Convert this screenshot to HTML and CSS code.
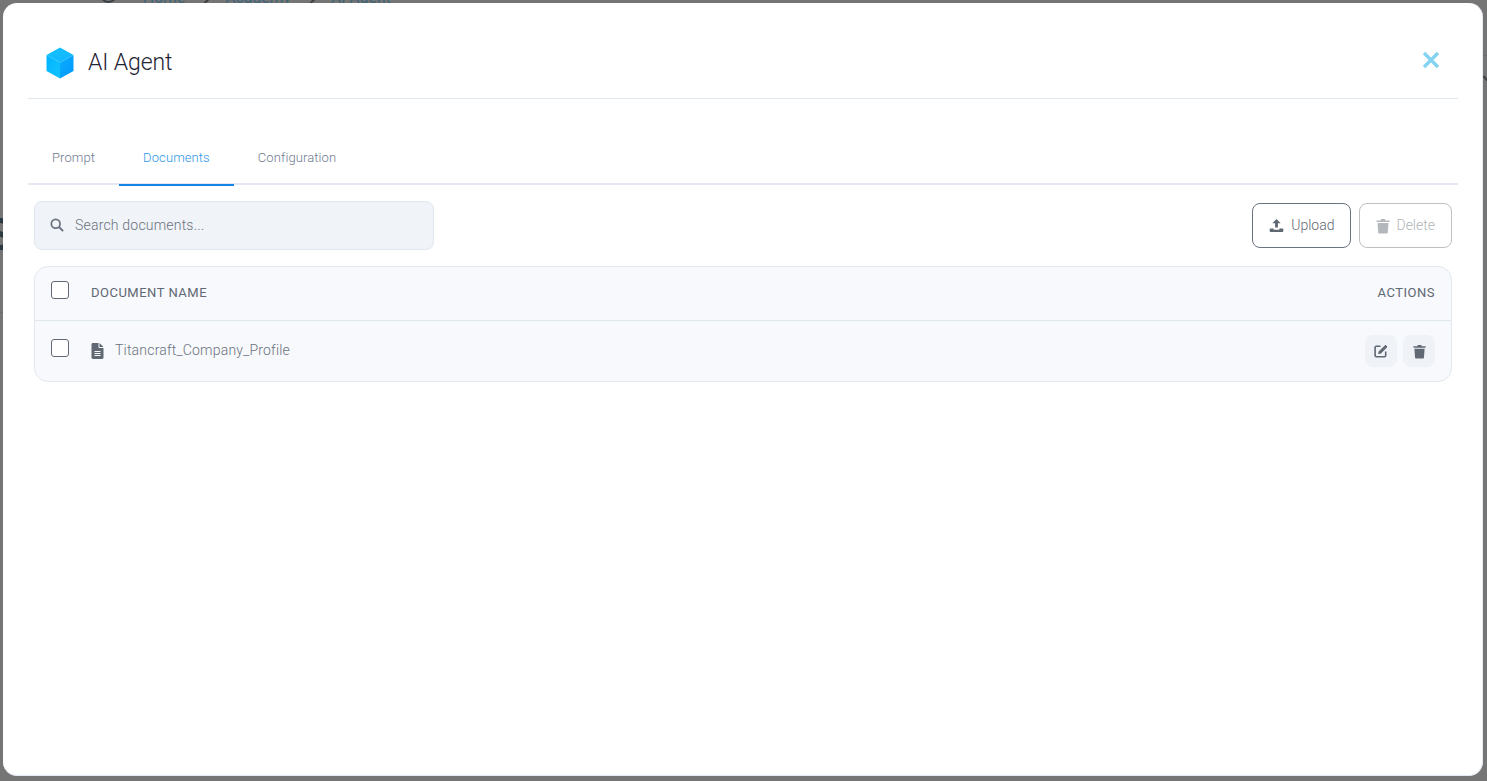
FILE: index.html
```html
<!DOCTYPE html>
<html lang="en">
<head>
    <meta charset="UTF-8">
    <meta name="viewport" content="width=device-width, initial-scale=1.0">
    <title>AI Agent</title>
    <link rel="stylesheet" href="styles.css">
</head>
<body>
    <!-- Page behind the backdrop, only its edges show -->
    <div class="behind">
        <span class="home-icon"></span>
        <span class="crumb">Home</span>
        <span class="crumb-sep"></span>
        <span class="crumb">Academy</span>
        <span class="crumb-sep"></span>
        <span class="crumb">AI Agent</span>
    </div>
    <div class="behind-letter">S</div>
    <div class="behind-rule rule-left"></div>
    <div class="behind-rule rule-right"></div>
    <div class="behind-caret"></div>

    <div class="modal">
        <header class="modal-header">
            <div class="modal-title">
                <svg class="cube" viewBox="0 0 28 32" width="28" height="32">
                    <defs>
                        <linearGradient id="cubeTop" x1="0" y1="0" x2="1" y2="1">
                            <stop offset="0" stop-color="#17c3ff"/>
                            <stop offset="1" stop-color="#0fb4ff"/>
                        </linearGradient>
                        <linearGradient id="cubeLeft" x1="0" y1="0" x2="1" y2="1">
                            <stop offset="0" stop-color="#00b4ff"/>
                            <stop offset="1" stop-color="#14c2ff"/>
                        </linearGradient>
                        <linearGradient id="cubeRight" x1="0" y1="0" x2="1" y2="1">
                            <stop offset="0" stop-color="#0cb0ff"/>
                            <stop offset="1" stop-color="#0096fb"/>
                        </linearGradient>
                    </defs>
                    <polygon points="14,0.5 27.5,8 14,15.5 0.5,8" fill="url(#cubeTop)"/>
                    <polygon points="0.5,8 14,15.5 14,31.5 0.5,24" fill="url(#cubeLeft)"/>
                    <polygon points="27.5,8 14,15.5 14,31.5 27.5,24" fill="url(#cubeRight)"/>
                </svg>
                <h1>AI Agent</h1>
            </div>
            <button class="close-btn" aria-label="Close">
                <svg viewBox="0 0 18 18" width="18" height="18">
                    <path d="M2 2L16 16M16 2L2 16" stroke="#85d3f2" stroke-width="3.4" fill="none"/>
                </svg>
            </button>
        </header>

        <nav class="tabs">
            <a href="#" class="tab">Prompt</a>
            <a href="#" class="tab active">Documents</a>
            <a href="#" class="tab">Configuration</a>
        </nav>

        <div class="content">
            <div class="toolbar">
                <div class="search">
                    <svg class="search-icon" viewBox="0 0 16 16" width="14" height="14">
                        <circle cx="6.5" cy="6.5" r="5" stroke="#6b7280" stroke-width="2" fill="none"/>
                        <path d="M10.3 10.3L15 15" stroke="#6b7280" stroke-width="2.2" fill="none"/>
                    </svg>
                    <span class="light-text">Search documents...</span>
                </div>
                <div class="actions">
                    <button class="btn">
                        <svg viewBox="0 0 16 16" width="15" height="15">
                            <path d="M8 1L12.4 5.6H9.5V10.2H6.5V5.6H3.6Z" fill="#5f6873"/>
                            <path d="M1.6 11.2H4.8V11.8C4.8 12.2 5.1 12.4 5.5 12.4H10.5C10.9 12.4 11.2 12.2 11.2 11.8V11.2H14.4C15 11.2 15.3 11.6 15.3 12.1V13.6C15.3 14.4 14.7 15 14 15H2C1.3 15 .7 14.4 .7 13.6V12.1C.7 11.6 1 11.2 1.6 11.2Z" fill="#5f6873"/>
                        </svg>
                        <span class="light-text">Upload</span>
                    </button>
                    <button class="btn disabled">
                        <svg viewBox="0 0 14 16" width="14" height="16">
                            <path d="M0.5 2.4H4.5L5.2 1H8.8L9.5 2.4H13.5V4H0.5ZM1.5 5H12.5L11.8 14.5C11.7 15.3 11.2 15.6 10.6 15.6H3.4C2.8 15.6 2.3 15.3 2.2 14.5Z" fill="#b4b8bd"/>
                        </svg>
                        <span class="light-text">Delete</span>
                    </button>
                </div>
            </div>

            <div class="doc-table">
                <div class="doc-row doc-head">
                    <span class="checkbox"></span>
                    <span class="col-name light-text">DOCUMENT NAME</span>
                    <span class="col-actions light-text">ACTIONS</span>
                </div>
                <div class="doc-row doc-item">
                    <span class="checkbox"></span>
                    <span class="col-name file">
                        <svg viewBox="0 0 12 16" width="13" height="16">
                            <path d="M1.4 0H7V4.2C7 4.6 7.4 5 7.8 5H12V14.6C12 15.4 11.4 16 10.6 16H1.4C.6 16 0 15.4 0 14.6V1.4C0 .6 .6 0 1.4 0ZM8 0L12 4H8ZM3 8V9H9V8ZM3 10V11H9V10ZM3 12V13H9V12Z" fill="#5f6873" fill-rule="evenodd"/>
                        </svg>
                        <span class="light-text">Titancraft_Company_Profile</span>
                    </span>
                    <span class="row-actions">
                        <button class="icon-btn">
                            <svg viewBox="0 0 14 14" width="14" height="14">
                                <path d="M6.5 2.2H2.3C1.6 2.2 1.1 2.7 1.1 3.4V11.6C1.1 12.3 1.6 12.8 2.3 12.8H10.5C11.2 12.8 11.7 12.3 11.7 11.6V7.4" stroke="#5f6873" stroke-width="1.6" fill="none"/>
                                <path d="M4.6 7.6L10.8 1.4C11.2 1 11.8 1 12.2 1.4L12.9 2.1C13.3 2.5 13.3 3.1 12.9 3.5L6.7 9.7L4.2 10.1Z" fill="#5f6873"/>
                            </svg>
                        </button>
                        <button class="icon-btn">
                            <svg viewBox="0 0 14 16" width="13" height="15">
                                <path d="M0.5 2.4H4.5L5.2 1H8.8L9.5 2.4H13.5V4H0.5ZM1.5 5H12.5L11.8 14.5C11.7 15.3 11.2 15.6 10.6 15.6H3.4C2.8 15.6 2.3 15.3 2.2 14.5Z" fill="#5f6873"/>
                            </svg>
                        </button>
                    </span>
                </div>
            </div>
        </div>
    </div>
</body>
</html>
```

FILE: styles.css
```css
* {
    box-sizing: border-box;
    margin: 0;
    padding: 0;
}
html, body {
    height: 100%;
}
body {
    font-family: Roboto, 'Liberation Sans', sans-serif;
    background-color: #757575;
    padding: 3px 4px 5px 3px;
    overflow: hidden;
    position: relative;
}
.behind {
    position: absolute;
    top: -11px;
    left: 143px;
    display: flex;
    gap: 15px;
    font-size: 15.6px;
    letter-spacing: 0.1px;
    color: #3d6478;
}
.home-icon {
    position: absolute;
    left: -43px;
    top: -3px;
    width: 17px;
    height: 17px;
    border: 2px solid #3a3f44;
    border-radius: 50%;
}
.crumb-sep {
    width: 10px;
    height: 10px;
    margin-top: 3px;
    border-top: 2px solid #3a3f44;
    border-right: 2px solid #3a3f44;
    transform: rotate(45deg);
}
.behind-letter {
    position: absolute;
    top: 209px;
    left: -14px;
    font-size: 44px;
    font-weight: 700;
    color: #2b3a42;
}
.behind-rule {
    position: absolute;
    width: 4px;
    height: 1px;
    background-color: #6a6a6a;
}
.rule-left {
    left: 0;
    top: 312px;
}
.rule-right {
    right: 0;
    top: 55px;
}
.behind-caret {
    position: absolute;
    right: -3px;
    top: 74px;
    width: 6px;
    height: 6px;
    border-left: 2px solid #3a3f44;
    border-bottom: 2px solid #3a3f44;
    transform: rotate(-45deg);
}
.modal {
    position: relative;
    height: 100%;
    background-color: #fff;
    border-radius: 14px;
    padding: 0 24px 0 25px;
    border-right: 1px solid #e4ebf2;
    border-bottom: 1px solid #e4ebf2;
    transform: translateZ(0);
}
.modal-header {
    height: 96px;
    display: flex;
    justify-content: space-between;
    align-items: center;
    border-bottom: 1px solid #dfe7ee;
    padding: 24px 18px 0 18px;
}
.modal-title {
    display: flex;
    align-items: center;
    gap: 14px;
}
.cube {
    display: block;
}
.modal-title h1 {
    font-size: 23px;
    font-weight: 300;
    letter-spacing: -0.1px;
    color: #1f2433;
}
.close-btn {
    border: none;
    background: none;
    display: flex;
    margin-top: -6px;
}
.tabs {
    display: flex;
    margin-top: 36px;
    height: 50px;
    border-bottom: 2px solid #e3e8f2;
}
.tab {
    padding: 0 24px;
    height: 51px;
    line-height: 46px;
    font-size: 13px;
    font-weight: 300;
    letter-spacing: 0.1px;
    color: #6f7a90;
    text-decoration: none;
}
.tab.active {
    color: #2b95ea;
    border-bottom: 2px solid #1485e6;
}
.content {
    padding: 0 6px;
}
.toolbar {
    display: flex;
    justify-content: space-between;
    align-items: center;
    margin-top: 16px;
}
.light-text {
    position: relative;
    top: -1px;
}
.search {
    width: 400px;
    height: 49px;
    display: flex;
    align-items: center;
    gap: 11px;
    padding-left: 15px;
    background-color: #f0f3f7;
    border: 1px solid #e1e7ef;
    border-radius: 8px;
    font-size: 14px;
    font-weight: 300;
    letter-spacing: 0.2px;
    color: #6b7280;
}
.search-icon {
    margin-top: -2px;
}
.actions {
    display: flex;
    gap: 8px;
}
.btn {
    height: 45px;
    padding: 0 16px;
    display: flex;
    align-items: center;
    gap: 7px;
    background-color: #fff;
    border: 1px solid #6b7280;
    border-radius: 8px;
    font-family: inherit;
    font-size: 14px;
    font-weight: 300;
    color: #5f6873;
}
.btn.disabled {
    border-color: #bdc1c6;
    color: #b0b5ba;
    gap: 6px;
}
.doc-table {
    margin-top: 16px;
    background-color: #f7f9fc;
    border: 1px solid #e1e8f0;
    border-radius: 14px;
}
.doc-row {
    display: flex;
    align-items: center;
    padding: 0 16px;
}
.doc-head {
    height: 54px;
    border-bottom: 1px solid #dfe7ee;
    font-size: 13px;
    font-weight: 400;
    color: #5f6873;
    letter-spacing: 0.5px;
}
.doc-item {
    height: 60px;
}
.checkbox {
    width: 18px;
    height: 18px;
    background-color: #fff;
    border: 1px solid #5f6873;
    border-radius: 3px;
    margin-top: -7px;
    flex-shrink: 0;
}
.doc-item .checkbox {
    margin-top: -6px;
}
.col-name {
    flex: 1;
    margin-left: 22px;
}
.col-name.file {
    display: flex;
    align-items: center;
    gap: 11px;
    font-size: 14px;
    font-weight: 300;
    letter-spacing: 0.2px;
    color: #6b7280;
}
.row-actions {
    display: flex;
    gap: 6px;
}
.icon-btn {
    width: 32px;
    height: 32px;
    display: flex;
    align-items: center;
    justify-content: center;
    background-color: #eff2f6;
    border: none;
    border-radius: 8px;
}
```
